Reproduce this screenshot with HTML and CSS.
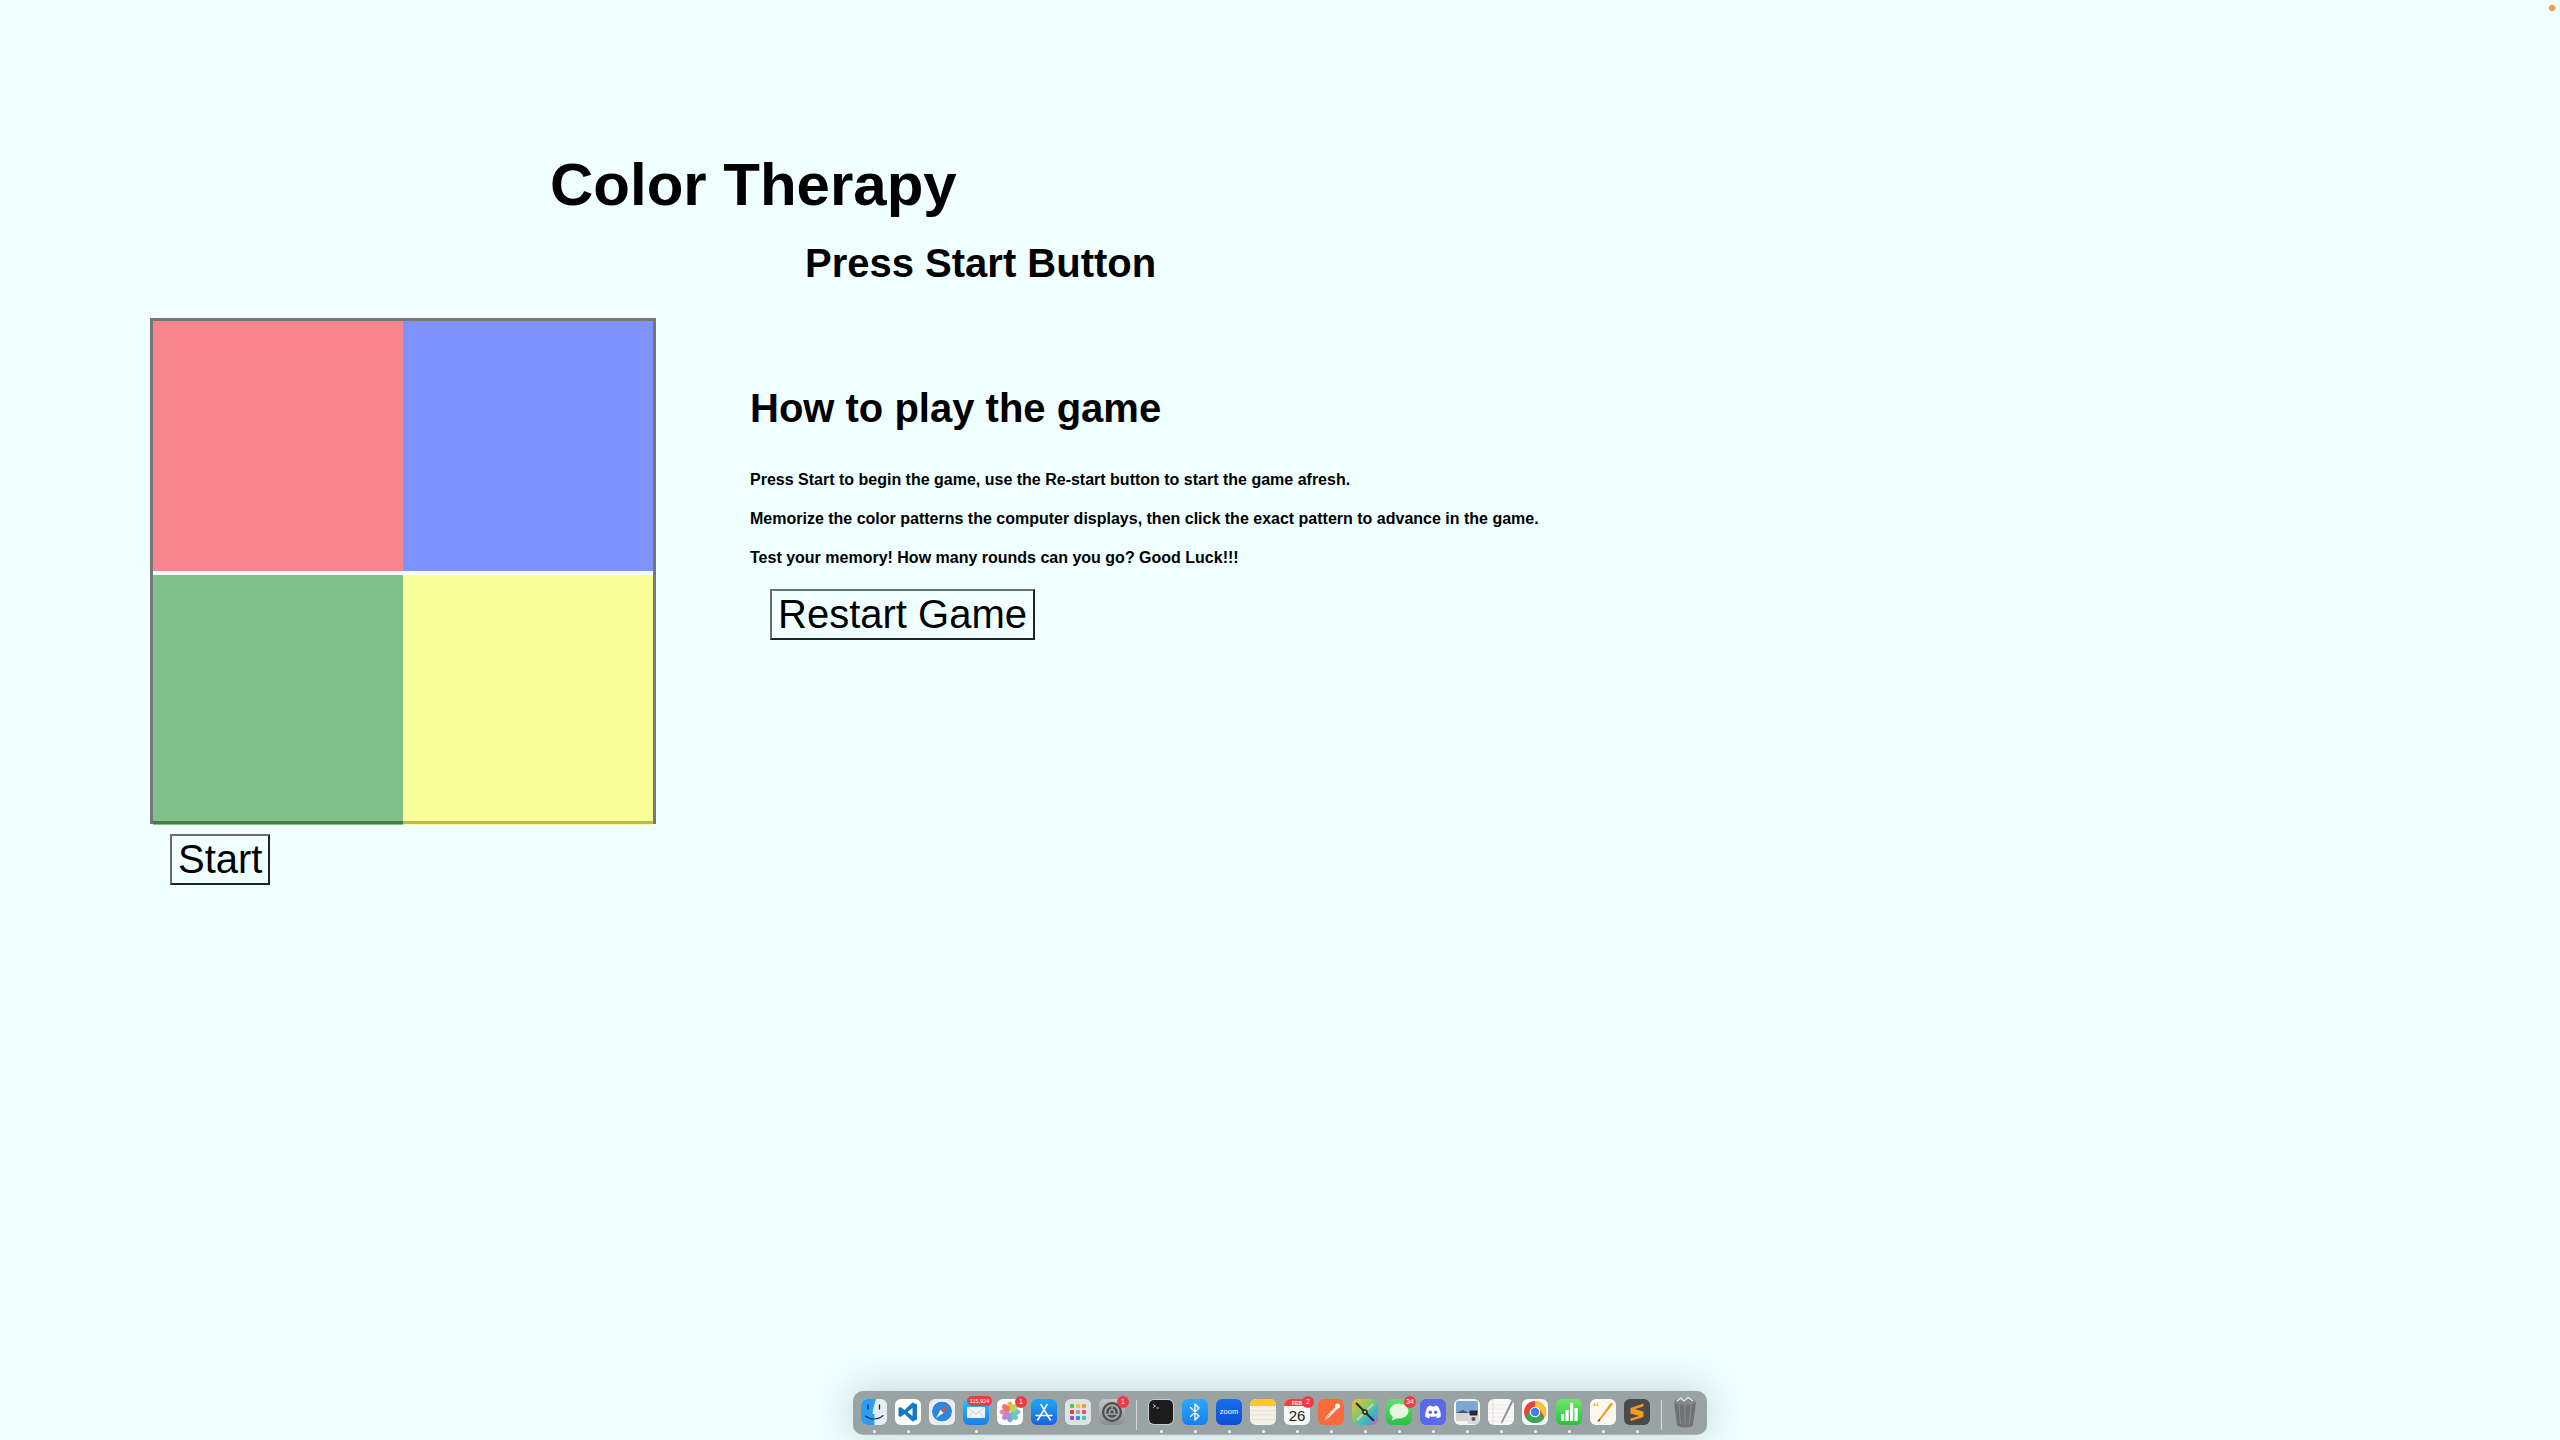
FILE: index.html
```html
<!DOCTYPE html>
<html lang="en">
<head>
<meta charset="utf-8">
<title>Color Therapy</title>
<link rel="stylesheet" href="styles.css">
</head>
<body>
<span class="mic-dot"></span>
<header class="titles">
  <h1 class="title">Color Therapy</h1>
  <h2 class="status">Press Start Button</h2>
</header>
<main class="game">
  <section class="play">
    <div class="board">
      <div class="cell red"></div>
      <div class="cell blue"></div>
      <div class="cell green"></div>
      <div class="cell yellow"></div>
    </div>
    <button class="btn start-btn">Start</button>
  </section>
  <section class="help">
    <h2 class="help-title">How to play the game</h2>
    <p class="help-text">Press Start to begin the game, use the Re-start button to start the game afresh.</p>
    <p class="help-text">Memorize the color patterns the computer displays, then click the exact pattern to advance in the game.</p>
    <p class="help-text">Test your memory! How many rounds can you go? Good Luck!!!</p>
    <button class="btn restart-btn">Restart Game</button>
  </section>
</main>

<nav class="dock">
  <div class="app on"><svg class="ico" viewBox="0 0 26 26"><rect width="26" height="26" fill="#e4ecf5"/><path d="M0 0H15C13 6 12 11 11.500 15H13.500V26H0Z" fill="#2e9df0"/><path d="M7 6V10M18.500 6V10" stroke="#17335a" stroke-width="1.300" stroke-linecap="round"/><path d="M4.500 17C9 21 17 21 22 16.500" fill="none" stroke="#17335a" stroke-width="1.100" stroke-linecap="round"/></svg></div>
  <div class="app on"><svg class="ico" viewBox="0 0 26 26"><rect width="26" height="26" fill="#fff"/><path d="M17.500 3.500L22 5.500V20.500L17.500 22.500L9.500 15L5.500 18L3.500 17V9L5.500 8L9.500 11ZM17.500 9L12.500 13L17.500 17Z" fill="#1778c4"/></svg></div>
  <div class="app"><svg class="ico" viewBox="0 0 26 26"><rect width="26" height="26" fill="#ececec"/><circle cx="13" cy="12.500" r="10.500" fill="#2a88de" stroke="#fff" stroke-width="1"/><path d="M19 6L14.500 14L11.500 11Z" fill="#f04a3a"/><path d="M7 19L11.500 11L14.500 14Z" fill="#f4f4f4"/></svg></div>
  <div class="app on"><svg class="ico" viewBox="0 0 26 26"><defs><linearGradient id="mailbg" x1="0" y1="0" x2="0" y2="1"><stop offset="0" stop-color="#2bc3f7"/><stop offset="1" stop-color="#1680ee"/></linearGradient></defs><rect width="26" height="26" fill="url(#mailbg)"/><rect x="4" y="8" width="18" height="11" fill="#f1f3f6"/><path d="M4 8L13 15L22 8M4 19L10 12.500M22 19L16 12.500" fill="none" stroke="#b9c0c8" stroke-width=".6"/></svg><span class="badge wide">115,924</span></div>
  <div class="app"><svg class="ico" viewBox="0 0 26 26"><rect width="26" height="26" fill="#fff"/><g opacity=".85"><ellipse cx="13" cy="7.500" rx="3" ry="5" fill="#f6a623"/><ellipse cx="13" cy="18.500" rx="3" ry="5" fill="#6a8fe0"/><ellipse cx="7.500" cy="13" rx="5" ry="3" fill="#e8739c"/><ellipse cx="18.500" cy="13" rx="5" ry="3" fill="#5bb8d8"/><ellipse cx="9" cy="9" rx="4.500" ry="3" transform="rotate(45 9 9)" fill="#ef5b4c"/><ellipse cx="17" cy="9" rx="4.500" ry="3" transform="rotate(-45 17 9)" fill="#a8cf45"/><ellipse cx="9" cy="17" rx="4.500" ry="3" transform="rotate(-45 9 17)" fill="#a877c8"/><ellipse cx="17" cy="17" rx="4.500" ry="3" transform="rotate(45 17 17)" fill="#55bfa0"/></g></svg><span class="badge">1</span></div>
  <div class="app"><svg class="ico" viewBox="0 0 26 26"><defs><linearGradient id="storebg" x1="0" y1="0" x2="0" y2="1"><stop offset="0" stop-color="#1fa8f6"/><stop offset="1" stop-color="#1a62dc"/></linearGradient></defs><rect width="26" height="26" fill="url(#storebg)"/><path d="M10 5.500L18 19M16 5.500L8 19M5 16.500H21M8 19L6.500 21M18 19L19.500 21" fill="none" stroke="#fff" stroke-width="1.500" stroke-linecap="round"/></svg></div>
  <div class="app"><svg class="ico launch" viewBox="0 0 26 26"><rect width="26" height="26" fill="#dfe2e4"/><rect x="5" y="5" width="4" height="4" rx="1" fill="#3fc75a"/><rect x="11" y="5" width="4" height="4" rx="1" fill="#f6c431"/><rect x="17" y="5" width="4" height="4" rx="1" fill="#f59a2f"/><rect x="5" y="11" width="4" height="4" rx="1" fill="#e33b3b"/><rect x="11" y="11" width="4" height="4" rx="1" fill="#9aa3a8"/><rect x="17" y="11" width="4" height="4" rx="1" fill="#ec4a7d"/><rect x="5" y="17" width="4" height="4" rx="1" fill="#8d55d8"/><rect x="11" y="17" width="4" height="4" rx="1" fill="#3c86ee"/><rect x="17" y="17" width="4" height="4" rx="1" fill="#3ac9b0"/></svg></div>
  <div class="app"><svg class="ico" viewBox="0 0 26 26"><defs><linearGradient id="setbg" x1="0" y1="0" x2="0" y2="1"><stop offset="0" stop-color="#c2c6c8"/><stop offset="1" stop-color="#8b9092"/></linearGradient></defs><rect width="26" height="26" fill="url(#setbg)"/><circle cx="13" cy="13" r="10" fill="#4a4c4e"/><circle cx="13" cy="13" r="6.800" fill="none" stroke="#a4a6a8" stroke-width="2"/><circle cx="13" cy="13" r="2.500" fill="none" stroke="#a4a6a8" stroke-width="1.500"/><path d="M13 6V10.500M7 16.500L10.800 14.200M19 16.500L15.200 14.200" stroke="#a4a6a8" stroke-width="1.300"/></svg><span class="badge">1</span></div>
  <div class="sep sep-a"></div>
  <div class="app on"><svg class="ico" viewBox="0 0 26 26"><rect width="26" height="26" fill="#c9cbcc"/><rect x="1" y="1" width="24" height="24" rx="5" fill="#1c1c1c"/><path d="M5 5.500L7.500 7L5 8.500" fill="none" stroke="#e8e8e8" stroke-width=".8"/><path d="M8.500 9H11" stroke="#e8e8e8" stroke-width=".8"/></svg></div>
  <div class="app on"><svg class="ico" viewBox="0 0 26 26"><defs><linearGradient id="btbg" x1="0" y1="0" x2="0" y2="1"><stop offset="0" stop-color="#2aa9fb"/><stop offset="1" stop-color="#1a80ee"/></linearGradient></defs><rect width="26" height="26" fill="url(#btbg)"/><path d="M8.500 8.500L17 17L13 21V5L17 9L8.500 17.500" fill="none" stroke="#fff" stroke-width="1.400" stroke-linejoin="round" stroke-linecap="round"/></svg></div>
  <div class="app on"><svg class="ico" viewBox="0 0 26 26"><defs><linearGradient id="zoombg" x1="0" y1="0" x2="0" y2="1"><stop offset="0" stop-color="#1a6cf0"/><stop offset="1" stop-color="#0b4fd2"/></linearGradient></defs><rect width="26" height="26" fill="url(#zoombg)"/><text class="zoom-word" x="13" y="15.200" text-anchor="middle">zoom</text></svg></div>
  <div class="app on"><svg class="ico" viewBox="0 0 26 26"><rect width="26" height="26" fill="#f4f1e8"/><rect width="26" height="7" fill="#fcc72e"/><path d="M0 11.500H26M0 16H26M0 20.500H26" stroke="#dcd8cc" stroke-width=".6"/></svg></div>
  <div class="app on"><svg class="ico" viewBox="0 0 26 26"><rect width="26" height="26" fill="#f6f6f6"/><rect width="26" height="7" fill="#f0413d"/><text class="cal-month" x="13" y="5.600" text-anchor="middle">FEB</text><text class="cal-day" x="13" y="21.500" text-anchor="middle">26</text></svg><span class="badge">2</span></div>
  <div class="app on"><svg class="ico" viewBox="0 0 26 26"><rect width="26" height="26" fill="#fa6a3c"/><path d="M19 6.500L8.500 17L6 21.500L10.500 19L21 8.500Z" fill="#fbe4da"/><circle cx="19.500" cy="7" r="2.500" fill="#fff"/><path d="M6 21.500L11 16" stroke="#fa6a3c" stroke-width=".7"/></svg></div>
  <div class="app on"><svg class="ico" viewBox="0 0 26 26"><defs><linearGradient id="toolbg" x1="0" y1="0" x2="1" y2="1"><stop offset="0" stop-color="#f4c22f"/><stop offset=".45" stop-color="#7fca6a"/><stop offset=".7" stop-color="#2fb8d8"/><stop offset="1" stop-color="#e85aa0"/></linearGradient></defs><rect width="26" height="26" fill="url(#toolbg)"/><path d="M4 4L22 22" stroke="#2c2c2c" stroke-width="2.200"/><path d="M21 5L5 21" stroke="#c8ccd0" stroke-width="2.200"/><circle cx="13" cy="13" r="2.800" fill="#222"/><circle cx="13" cy="13" r="1.200" fill="#f4d13c"/></svg></div>
  <div class="app on"><svg class="ico" viewBox="0 0 26 26"><defs><linearGradient id="msgbg" x1="0" y1="0" x2="0" y2="1"><stop offset="0" stop-color="#62e06a"/><stop offset="1" stop-color="#2ac046"/></linearGradient></defs><rect width="26" height="26" fill="url(#msgbg)"/><ellipse cx="13" cy="12" rx="9.500" ry="7.500" fill="#e6f6dc"/><path d="M7 17L6 21.500L11.500 19Z" fill="#e6f6dc"/></svg><span class="badge">34</span></div>
  <div class="app on"><svg class="ico" viewBox="0 0 26 26"><rect width="26" height="26" fill="#5a68ea"/><path d="M8 7.500C9.500 6.800 10.500 6.500 11 6.500L11.500 7.500H14.500L15 6.500C15.500 6.500 16.500 6.800 18 7.500C20 10.500 21 14 20.800 17.500C19.500 18.500 18.200 19 17 19.300L16 17.700L17 17C15 18 11 18 9 17L10 17.700L9 19.300C7.800 19 6.500 18.500 5.200 17.500C5 14 6 10.500 8 7.500Z" fill="#fff"/><circle cx="10.300" cy="13.200" r="1.700" fill="#5a68ea"/><circle cx="15.700" cy="13.200" r="1.700" fill="#5a68ea"/></svg></div>
  <div class="app on"><svg class="ico" viewBox="0 0 26 26"><rect width="26" height="26" fill="#f3f3f3"/><rect x="2" y="2" width="22" height="20" rx="2" fill="#7ea6d6"/><rect x="2" y="14" width="22" height="8" fill="#d8d4cc"/><path d="M2 14L9 11L15 14Z" fill="#43546e"/><rect x="14" y="14" width="11" height="11" rx="1.500" fill="#d8d8d8"/><rect x="15.500" y="11.500" width="8" height="5" rx="1" fill="#2a2a2a"/><circle cx="19.500" cy="20" r="2" fill="#555"/></svg></div>
  <div class="app on"><svg class="ico" viewBox="0 0 26 26"><rect width="26" height="26" fill="#fbf9f6"/><path d="M0 6H26M0 10H26M0 14H26M0 18H26M0 22H26" stroke="#d9dde5" stroke-width=".5"/><path d="M5 0V26" stroke="#eeb0b0" stroke-width=".5"/><path d="M24 0L13.500 22L12.500 25L15 23L25.500 2Z" fill="#8d96a0"/></svg></div>
  <div class="app on"><svg class="ico" viewBox="0 0 26 26"><rect width="26" height="26" fill="#f5f5f5"/><circle cx="13" cy="13" r="11" fill="#e5453a"/><path d="M13 13L3.500 18.500A11 11 0 0 0 13 24A11 11 0 0 0 22.500 18.500Z" fill="#37a853"/><path d="M13 2A11 11 0 0 1 22.500 18.500L18 10.500L13 8Z" fill="#fcc52d"/><path d="M3.500 18.500L8.500 10.500L13 18Z" fill="#37a853"/><circle cx="13" cy="13" r="5.300" fill="#fff"/><circle cx="13" cy="13" r="4.200" fill="#3b7ef0"/></svg></div>
  <div class="app on"><svg class="ico" viewBox="0 0 26 26"><defs><linearGradient id="numbg" x1="0" y1="0" x2="0" y2="1"><stop offset="0" stop-color="#6fe76b"/><stop offset="1" stop-color="#26c23a"/></linearGradient></defs><rect width="26" height="26" fill="url(#numbg)"/><rect x="5" y="15" width="3.200" height="7" fill="#fff"/><rect x="9.500" y="11" width="3.200" height="11" fill="#fff"/><rect x="14" y="4" width="3.200" height="18" fill="#fff"/><rect x="18.500" y="9" width="3.200" height="13" fill="#fff"/></svg></div>
  <div class="app on"><svg class="ico" viewBox="0 0 26 26"><rect width="26" height="26" fill="#fbf8f0"/><path d="M21 3.500L9 20L7.500 23L10.500 21L23 5Z" fill="#f39a1f"/><path d="M9 20L7.500 23L10.500 21Z" fill="#333"/><text class="quote-mark" x="3" y="12.500">“</text></svg></div>
  <div class="app on"><svg class="ico" viewBox="0 0 26 26"><rect width="26" height="26" fill="#4a4a4a"/><path d="M19.500 4.500L6.500 9V14.500L15 17L6.500 19.500V22L19.500 18V12.500L11 10L19.500 7.500Z" fill="#f39a1f"/></svg></div>
  <div class="sep sep-b"></div>
  <div class="app trash"><svg class="trash-ico" viewBox="0 0 26 32"><path d="M2 6L5 29.500C8 32 18 32 21 29.500L24 6Z" fill="#6f7375"/><path d="M7 9L8.500 28M13 9V29M19 9L17.500 28" stroke="#8c9092" stroke-width="1"/><ellipse cx="13" cy="5.500" rx="11" ry="3.500" fill="#85898b"/><path d="M5 5L9 2L12 5L16 1.500L21 5" fill="none" stroke="#dfe3e6" stroke-width="1.500"/></svg></div>
</nav>
</body>
</html>
```
FILE: styles.css
```css
html, body {
  margin: 0;
  height: 100%;
}

body {
  position: relative;
  overflow: hidden;
  background: #f0ffff;
  color: #000;
  font-family: "Liberation Sans", Arial, sans-serif;
}

.mic-dot {
  position: absolute;
  top: 5px;
  right: 5px;
  width: 6px;
  height: 6px;
  border-radius: 50%;
  background: #fb9a2c;
}

.titles {
  padding-top: 150px;
}

.title {
  margin: 0 0 0 550px;
  font-size: 60px;
  line-height: 69px;
  font-weight: 700;
}

.status {
  margin: 21px 0 0 805px;
  font-size: 40px;
  line-height: 46px;
  font-weight: 700;
}

.game {
  display: flex;
  margin-top: 32px;
}

.play {
  margin-left: 150px;
  width: 506px;
}

.board {
  display: grid;
  grid-template-columns: 250px 250px;
  grid-auto-rows: 250px;
  row-gap: 4px;
  width: 500px;
  height: 500px;
  border: 3px solid #777;
}

.cell.red { background: rgba(255, 11, 27, .5); }
.cell.blue { background: rgba(12, 39, 255, .5); }
.cell.green { background: rgba(20, 129, 19, .5); }
.cell.yellow { background: rgba(255, 255, 51, .5); }

.btn {
  display: block;
  padding: 0 6px;
  font-family: "Liberation Sans", Arial, sans-serif;
  font-size: 40px;
  line-height: 47px;
  color: #000;
  background: #f0ffff;
  border: 2px solid;
  border-color: #6e6e6e #222 #222 #6e6e6e;
}

.start-btn {
  margin: 10px 0 0 20px;
}

.help {
  margin-left: 94px;
  padding-top: 67px;
}

.help-title {
  margin: 0;
  font-size: 40px;
  line-height: 46px;
  font-weight: 700;
}

.help-text {
  margin: 21px 0 0;
  font-size: 16px;
  line-height: 18px;
  font-weight: 700;
}

.help-title + .help-text {
  margin-top: 40px;
}

.restart-btn {
  margin: 22px 0 0 20px;
}

.dock {
  position: absolute;
  left: 853px;
  top: 1391px;
  width: 854px;
  height: 44px;
  box-sizing: border-box;
  display: flex;
  align-items: flex-start;
  gap: 8px;
  padding: 8px 0 0 8px;
  background: #9aa3a3;
  border-radius: 10px;
  border-bottom: 1px solid #adb5b5;
  box-shadow: 0 0 40px rgba(70, 90, 90, .28);
}

.app {
  position: relative;
  flex: none;
  width: 26px;
  height: 26px;
}

.app.on::after {
  content: "";
  position: absolute;
  left: 11.500px;
  top: 30.500px;
  width: 3px;
  height: 3px;
  border-radius: 50%;
  background: #f4f6f6;
}

.ico {
  display: block;
  width: 26px;
  height: 26px;
  border-radius: 6px;
}

.trash {
  margin-left: -1px;
}

.trash-ico {
  display: block;
  width: 26px;
  height: 32px;
  margin-top: -3px;
}

.sep {
  flex: none;
  width: 1px;
  height: 30px;
  margin-top: 1px;
  background: #d4d9d9;
}

.sep-a {
  margin-left: 3px;
  margin-right: 3px;
}

.sep-b {
  margin-left: 3px;
  margin-right: 3px;
}

.badge {
  position: absolute;
  top: -3px;
  left: 18px;
  min-width: 12px;
  height: 12px;
  border-radius: 6px;
  background: #ee3b42;
  color: #fff;
  font-size: 7px;
  line-height: 12px;
  text-align: center;
}

.badge.wide {
  left: 4px;
  width: 25px;
  height: 10px;
  min-width: 0;
  border-radius: 5px;
  font-size: 5.500px;
  line-height: 10px;
}

.zoom-word {
  font-family: "Liberation Sans", Arial, sans-serif;
  font-size: 7.500px;
  fill: #fff;
}

.cal-month {
  font-family: "Liberation Sans", Arial, sans-serif;
  font-size: 5px;
  font-weight: 700;
  fill: #fff;
}

.cal-day {
  font-family: "Liberation Sans", Arial, sans-serif;
  font-size: 15px;
  fill: #222;
}

.quote-mark {
  font-family: "Liberation Serif", serif;
  font-size: 14px;
  fill: #f39a1f;
}
```
